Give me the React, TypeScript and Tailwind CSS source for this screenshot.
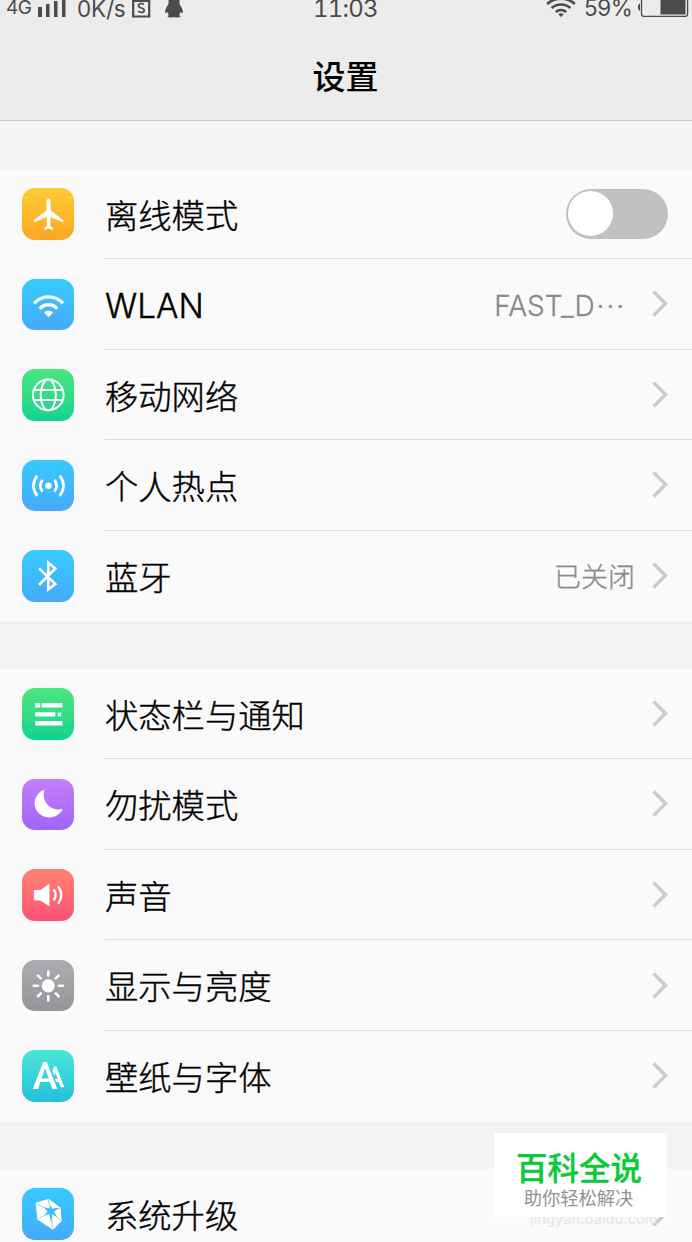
import type { ReactNode } from "react";

const white = { fill: "none", stroke: "#fff" } as const;

function Plane() {
  return (
    <path
      fill="#fff"
      d="M26.3 10.5c1.4 0 2.1 2 2.1 4.2v7.6L40.7 31.600c.5.5.5 1.700.2 2.500L28.300 28.600l-.4 8.600 2.800 2.700v1.600L26.300 40l-4.300 1.500v-1.600l2.800-2.700-.4-8.600-12.500 5.500c-.3-.8-.3-2 .2-2.500l12.200-9.300v-7.600c0-2.200.7-4.200 2-4.200z"
    />
  );
}

function Wifi() {
  return (
    <g>
      <path {...white} strokeWidth="3.400" d="M12 24C20 15.600 32.500 15.600 40.600 24" />
      <path {...white} strokeWidth="3.400" d="M17.600 29.400C22.500 24.300 30 24.300 35 29.400" />
      <path fill="#fff" d="M21.800 33.400c2.600-2.600 6.400-2.600 9 0L26.300 38z" />
    </g>
  );
}

function Globe() {
  return (
    <g {...white} strokeWidth="2">
      <circle cx="26" cy="25.700" r="15.200" />
      <ellipse cx="26" cy="25.700" rx="7.500" ry="15.200" />
      <path d="M11.700 20.700h28.600M11.700 30.700h28.600" />
    </g>
  );
}

function Hotspot() {
  return (
    <g {...white} strokeWidth="2.700">
      <circle cx="26.200" cy="25.500" r="3.200" fill="#fff" stroke="none" />
      <path d="M20.300 19.700q-4.400 5.800 0 11.600M32.100 19.700q4.400 5.800 0 11.600M15 15.500q-7.300 10 0 20M37.400 15.500q7.300 10 0 20" />
    </g>
  );
}

function Bluetooth() {
  return <path {...white} strokeWidth="2.600" d="M17 18.200 33 33.700 26 39V12.400l7 5.900L17 34.400" />;
}

function Bars() {
  return (
    <g>
      <path fill="#fff" d="M13 14.800h5v4.500h-5zM19.500 14.800h20.500v4.500H19.500zM13 24h20v4.300H13zM13 32.800h27v4.400H13z" />
      <path {...white} strokeWidth="1.400" d="m35.400 24.500 3.400 3.400m0-3.400-3.400 3.400" />
    </g>
  );
}

function Moon() {
  return (
    <path
      fill="#fff"
      d="M22.300 10.400C12 14.400 9.800 26 15.700 33c7 8.300 20.500 6 24.600-3.200C28 32.500 18.700 22 22.300 10.400z"
    />
  );
}

function Sound() {
  return (
    <g>
      <path fill="#fff" d="M11.700 20.700h6.300l9.200-6.200v22.400L18 31.300h-6.300z" />
      <path {...white} strokeWidth="2.300" d="M31.300 20.300q4.200 5.400 0 10.800M35.600 17q6.800 8.700 0 17.500" />
    </g>
  );
}

function Sun() {
  return (
    <g>
      <circle cx="26" cy="25.600" r="6.500" fill="#fff" />
      <path
        {...white}
        strokeWidth="2.500"
        strokeLinecap="round"
        d="M26 11.300v4M26 36v4M11.600 25.600h4M36.600 25.600h4M15.800 15.400l2.900 2.900M33.400 33l2.900 2.900M15.800 35.900l2.900-2.900M33.400 18.300l2.900-2.900"
      />
    </g>
  );
}

function TypeIcon() {
  return (
    <g fill="#fff">
      <path
        fillRule="evenodd"
        d="M21 12h3.500L35 38.700h-5l-2.400-6.900h-9.300L16 38.700h-5.400zM22.800 17.800l-3.500 10.400h7.200z"
      />
      <path d="M31.600 16.300H34L41.800 36.800h-3.600l-1.900-5.200h-2.500l-1.200-3h2.700l-2-6-1.200 2.800-1.900-4.600z" />
    </g>
  );
}

function Gem() {
  return (
    <g>
      <path
        fill="#fff"
        strokeLinejoin="round"
        stroke="#fff"
        strokeWidth="1.500"
        d="m14.300 15.200 11.900-3.600 11.400 8.300.9 12.600-7.900 7.900-14.700-9.700z"
      />
      <path fill="none" stroke="#3fbcff" strokeWidth=".6" d="M15 15.800l13.700 7.900L26 11.500M28.700 23.700 37.500 20M28.700 23.700l9.500 8.500M28.700 23.700 30.300 40M28.700 23.700 16 30.300" />
      <path fill="#3fbcff" d="m21.800 19 5.400 1.400 1.600-3.200.9 3.300 7-1.100-4.900 3.900 3 5.400-4.800-2.600-1.200 8.300-1.800-8.600-4.700 1.400 3-4.200z" />
    </g>
  );
}

type Item = { label: string; color: string; icon: ReactNode; value?: ReactNode; toggle?: boolean };

const blue = "from-[#35cbff] to-[#45a9fc]";
const green = "from-[#49e681] to-[#0bd48d]";

const groups: Item[][] = [
  [
    { label: "离线模式", color: "from-[#fccb35] to-[#fda621]", icon: <Plane />, toggle: true },
    {
      label: "WLAN",
      color: blue,
      icon: <Wifi />,
      value: (
        <span className="mr-[26px] text-[28px]">
          FAST_D<span className="ml-[2px] tracking-[1.900px]">···</span>
        </span>
      ),
    },
    { label: "移动网络", color: green, icon: <Globe /> },
    { label: "个人热点", color: blue, icon: <Hotspot /> },
    { label: "蓝牙", color: blue, icon: <Bluetooth />, value: <span className="mr-[17px] text-[27px]">已关闭</span> },
  ],
  [
    { label: "状态栏与通知", color: green, icon: <Bars /> },
    { label: "勿扰模式", color: "from-[#c57df9] to-[#a164fc]", icon: <Moon /> },
    { label: "声音", color: "from-[#ff8471] to-[#ff4e76]", icon: <Sound /> },
    { label: "显示与亮度", color: "from-[#acacb1] to-[#949499]", icon: <Sun /> },
    { label: "壁纸与字体", color: "from-[#4ce5da] to-[#20c1d9]", icon: <TypeIcon /> },
  ],
  [{ label: "系统升级", color: blue, icon: <Gem /> }],
];

function Row({ item, last }: { item: Item; last: boolean }) {
  return (
    <div className="flex h-[90.55px] items-center pl-[22px]">
      <div className={`h-[51.5px] w-[51.5px] shrink-0 rounded-[13px] bg-linear-to-b ${item.color}`}>
        <svg viewBox="0 0 51 51" className="h-full w-full">{item.icon}</svg>
      </div>
      <div className={`ml-[31.5px] flex h-full flex-1 items-center border-b-[1.5px] pt-[1px] pr-6 ${last ? "border-transparent" : "border-[#dedede]"}`}>
        <span className="flex-1 pt-[5px] text-[33.3px] leading-none font-light whitespace-nowrap text-black [-webkit-text-stroke:0.4px_black]">{item.label}</span>
        {item.value && (
          <span className="pt-[4px] leading-none font-light whitespace-nowrap text-[#888] [-webkit-text-stroke:0.3px_#888]">{item.value}</span>
        )}
        {item.toggle ? (
          <div className="flex h-[50px] w-[102.5px] items-center rounded-full bg-[#c1c1c1] px-[2px]">
            <div className="h-[45px] w-[45px] rounded-full bg-white" />
          </div>
        ) : (
          <svg viewBox="0 0 16 28" className="h-7 w-4" fill="none" stroke="#cbcbcb" strokeWidth="3.400">
            <path d="M1.500 1.500 13.600 13.500 1.500 25.500" />
          </svg>
        )}
      </div>
    </div>
  );
}

function StatusBar() {
  return (
    <div className="flex h-[20px] items-start text-[#4b4b4b]">
      <span className="ml-[6px] w-[32px] text-[19px] leading-[16px] tracking-[-0.5px]">4G</span>
      <svg viewBox="0 0 28 17" className="h-[17px] w-7" fill="currentColor">
        <path d="M0 7h4v10H0zM8 4h3.500v13H8zM16 1h3.500v16H16zM24-2h3.500v19H24z" />
      </svg>
      <span className="ml-[11px] w-[55px] text-[22.5px] leading-[17px] tracking-[-0.2px] whitespace-nowrap">0K/s</span>
      <svg viewBox="0 0 19 18" className="h-[18px] w-[19px]" fill="none" stroke="currentColor" strokeWidth="2.200">
        <path d="M1.200 0v16.500h16V1H0" />
        <path strokeWidth="1.700" d="M12 4.500C10.500 3 6.500 3 6.500 5.700c0 3 5.700 1.500 5.700 4.500 0 2.800-4.500 2.800-6 .8" />
      </svg>
      <svg viewBox="0 0 18 18" className="ml-[14px] h-[18px] w-[18px]" fill="currentColor">
        <path d="M3.500 0h11v4l2 3.300c1.200 2.300 1.700 5 1 5.800-.5.500-1.300-.4-1.900-1.300-.2 1.300-.8 2.400-1.500 3.100.9.500 1.400 1.100 1.200 1.900-.2.800-4.400.8-6.300.1-1.900.7-6.100.7-6.300-.1-.2-.8.300-1.400 1.200-1.900-.7-.7-1.300-1.800-1.500-3.100-.6.9-1.400 1.800-1.900 1.300-.7-.8-.2-3.500 1-5.800l2-3.300z" />
      </svg>
      <span className="ml-[130px] w-[70px] text-[24px] leading-[18px] tracking-[-0.8px] tabular-nums">11:03</span>
      <svg viewBox="0 0 30 17" className="ml-[163px] h-[17px] w-[30px]" fill="none" stroke="currentColor" strokeWidth="2.600">
        <path d="M1.200 4C9-3 21-3 28.800 4M5.600 8c5.400-4.700 13.400-4.700 18.800 0M9.800 12c3-2.600 7.400-2.600 10.400 0" />
        <path fill="currentColor" stroke="none" d="M12.200 14.300c1.700-1.400 3.900-1.400 5.600 0L15 17z" />
      </svg>
      <span className="ml-[8px] w-[54px] text-[22.5px] leading-[16px] tracking-[-0.4px]">59%</span>
      <svg viewBox="0 0 52 18" className="h-[18px] w-[52px] shrink-0" fill="none" stroke="currentColor">
        <path strokeWidth="1.300" d="M3.500-2v16q0 2.300 2.300 2.300h41.500q2.300 0 2.300-2.300V-2" />
        <path fill="currentColor" stroke="none" d="M22.500 0h25v14.500h-25zM2 3.500v7.500C-.7 10.500-.7 4 2 3.500z" />
      </svg>
    </div>
  );
}

export default function App() {
  return (
    <div className="relative h-[1242px] w-[692px] overflow-hidden bg-[#f3f3f3] font-['Inter','Noto_Sans_CJK_SC',sans-serif]">
      <header className="mb-[47.5px] h-[121px] border-b-[1.5px] border-[#cdcdcd] bg-[#ececec]">
        <StatusBar />
        <h1 className="mt-[41px] pr-[1px] text-center text-[33px] leading-[33px] font-medium text-black">设置</h1>
      </header>
      <main className="flex flex-col gap-[47.400px]">
        {groups.map((items, index) => (
          <section key={index} className="bg-[#fafafa]">
            {items.map((item, i) => (
              <Row key={item.label} item={item} last={i === items.length - 1} />
            ))}
          </section>
        ))}
      </main>
      <div className="absolute top-[1208px] left-[530px] text-[14.500px] leading-[22px] font-medium text-[#e6e6e6]">jingyan.baidu.com</div>
      <div className="absolute top-[1133px] left-[494px] flex h-[84px] w-[173px] flex-col items-center bg-white pt-[17px] font-['Noto_Sans_CJK_SC',sans-serif]">
        <span className="pr-[3px] text-[31.500px] leading-[33px] font-medium text-[#08ca38] [-webkit-text-stroke:0.3px_#08ca38]">百科全说</span>
        <span className="mt-[4px] pr-1 text-[18.300px] leading-[20px] text-[#929292]">助你轻松解决</span>
      </div>
    </div>
  );
}
